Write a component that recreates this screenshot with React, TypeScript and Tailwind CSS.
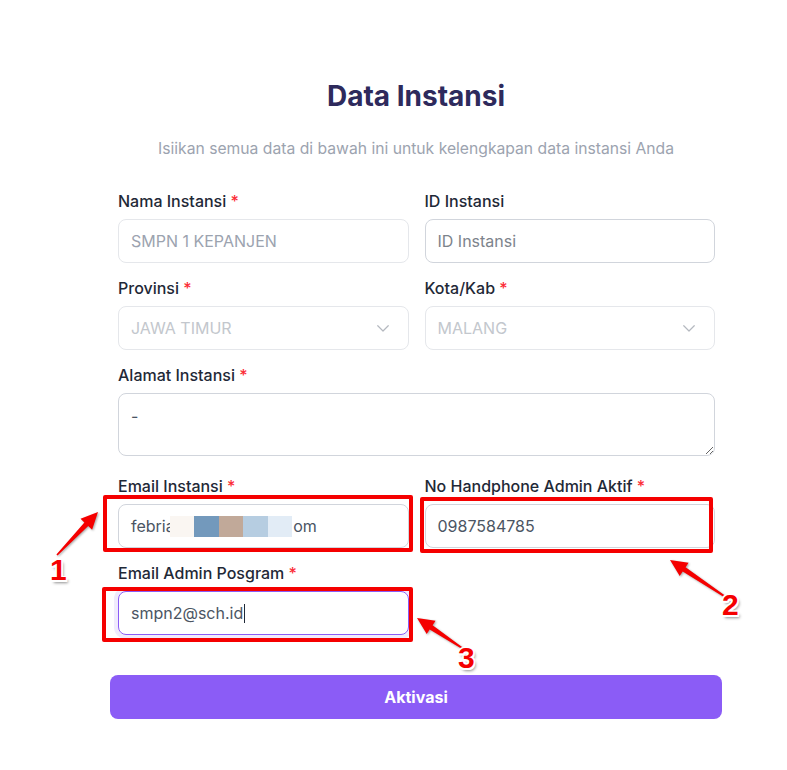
import type React from "react";

// Red callout arrow: thin tail widening into a triangular head
const arrowPoints = (tx: number, ty: number, hx: number, hy: number) => {
  const dx = hx - tx;
  const dy = hy - ty;
  const len = Math.hypot(dx, dy);
  const ux = dx / len;
  const uy = dy / len;
  const nx = -uy;
  const ny = ux;
  const L = 17;
  const hw = 8;
  const sw = 2.6;
  const tw = 0.8;
  const bx = hx - ux * L;
  const by = hy - uy * L;
  const p = (x: number, y: number) => `${x.toFixed(1)},${y.toFixed(1)}`;
  return [
    p(tx + nx * tw, ty + ny * tw),
    p(bx + nx * sw, by + ny * sw),
    p(bx + nx * hw, by + ny * hw),
    p(hx, hy),
    p(bx - nx * hw, by - ny * hw),
    p(bx - nx * sw, by - ny * sw),
    p(tx - nx * tw, ty - ny * tw),
  ].join(" ");
};

const Label: React.FC<{ text: string; required?: boolean }> = ({ text, required }) => (
  <div className="mb-1.5 text-[16px] leading-6 font-medium text-[#1f2937]">
    {text}
    {required && <span className="text-red-500"> *</span>}
  </div>
);

const Chevron = () => (
  <svg viewBox="0 0 24 24" fill="none" stroke="#b4b8bf" strokeWidth={1.6} className="w-[18px] h-[18px]">
    <path d="M5 9l7 7 7-7" strokeLinecap="round" strokeLinejoin="round" />
  </svg>
);

const blocks = ["#faf6f2", "#7399bc", "#c1a999", "#b6cde1", "#e2ecf6"];

const numberShadow =
  "[text-shadow:-1.5px_-1.5px_0_#fff,1.5px_-1.5px_0_#fff,-1.5px_1.5px_0_#fff,1.5px_1.5px_0_#fff,0_1.5px_0_#fff,1.5px_0_0_#fff,-1.5px_0_0_#fff,0_-1.5px_0_#fff,2px_3px_3px_rgba(0,0,0,0.45)]";

export default function App() {
  return (
    <div className="relative min-h-[770px] bg-white font-['Inter',sans-serif]">
      <div className="ml-[110px] w-[612px] pt-[79px]">
        <h1 className="text-center text-[28px] leading-[35px] font-bold text-[#2e2a5c]">Data Instansi</h1>
        <p className="mt-[23px] text-center text-[15.7px] leading-6 text-[#9ca3af]">
          Isiikan semua data di bawah ini untuk kelengkapan data instansi Anda
        </p>

        <div className="mt-[28px] ml-2 mr-[7px] grid grid-cols-2 gap-x-4 gap-y-[13px]">
          <div>
            <Label text="Nama Instansi" required />
            <div className="flex h-[44px] items-center rounded-lg border border-gray-200 px-3 text-[16px] text-[#9ca3af]">
              SMPN 1 KEPANJEN
            </div>
          </div>
          <div>
            <Label text="ID Instansi" />
            <div className="flex h-[44px] items-center rounded-lg border border-gray-300 px-3 text-[16px] text-[#7d838c]">
              ID Instansi
            </div>
          </div>

          <div>
            <Label text="Provinsi" required />
            <div className="flex h-[44px] items-center justify-between rounded-lg border border-gray-200 pl-3 pr-4 text-[16px] text-[#c3c7cd]">
              JAWA TIMUR
              <Chevron />
            </div>
          </div>
          <div>
            <Label text="Kota/Kab" required />
            <div className="flex h-[44px] items-center justify-between rounded-lg border border-gray-200 pl-3 pr-4 text-[16px] text-[#c3c7cd]">
              MALANG
              <Chevron />
            </div>
          </div>

          <div className="col-span-2">
            <Label text="Alamat Instansi" required />
            <textarea
              readOnly
              defaultValue="-"
              className="mb-[5px] block h-[63px] w-full rounded-lg border border-gray-300 px-3 py-2.5 text-[16px] leading-6 text-[#4b5563] outline-none"
            />
          </div>

          <div>
            <Label text="Email Instansi" required />
            <div className="flex h-[44px] items-center rounded-lg border border-gray-300 px-3 text-[16px] text-[#4b5563]">
              <span className="whitespace-nowrap">febria</span>
              <span className="-ml-[5px] flex">
                {blocks.map((c) => (
                  <span key={c} className="h-[21px] w-[24.5px]" style={{ backgroundColor: c }} />
                ))}
              </span>
              <span className="ml-[1px]">om</span>
            </div>
          </div>
          <div>
            <Label text="No Handphone Admin Aktif" required />
            <div className="flex h-[44px] items-center rounded-lg border border-gray-300 px-3 text-[16px] text-[#4b5563]">
              0987584785
            </div>
          </div>

          <div>
            <Label text="Email Admin Posgram" required />
            <div className="flex h-[44px] items-center rounded-lg border border-[#8b5cf6] px-3 text-[16px] text-[#4b5563] ring-4 ring-[#f0ebfd]">
              smpn2@sch.id
              <span className="ml-[1px] h-[19px] w-px bg-[#1f2937]" />
            </div>
          </div>
        </div>

        <button className="mt-10 flex h-[44px] w-full items-center justify-center rounded-lg bg-[#8b5cf6] text-[16px] font-bold text-white">
          Aktivasi
        </button>
      </div>

      {/* Annotation overlay */}
      <div className="absolute left-[103px] top-[495px] h-[57px] w-[310px] rounded-[2px] border-4 border-[#f50000]" />
      <div className="absolute left-[420px] top-[497px] h-[56px] w-[293px] rounded-[2px] border-4 border-[#f50000]" />
      <div className="absolute left-[102px] top-[587px] h-[55px] w-[311px] rounded-[2px] border-4 border-[#f50000]" />

      <svg
        width="787"
        height="770"
        viewBox="0 0 787 770"
        className="pointer-events-none absolute left-0 top-0 [filter:drop-shadow(1px_1.5px_1px_rgba(0,0,0,0.35))]"
      >
        <polygon points={arrowPoints(57, 555, 98, 512)} fill="#f50000" />
        <polygon points={arrowPoints(727, 598, 670, 560)} fill="#f50000" />
        <polygon points={arrowPoints(462, 648, 417, 618)} fill="#f50000" />
      </svg>

      <span className={"absolute left-[50px] top-[555px] text-[30px] leading-none font-bold text-[#f50000] font-['Liberation_Sans',Arial,sans-serif] " + numberShadow}>
        1
      </span>
      <span className={"absolute left-[722px] top-[590px] text-[30px] leading-none font-bold text-[#f50000] font-['Liberation_Sans',Arial,sans-serif] " + numberShadow}>
        2
      </span>
      <span className={"absolute left-[458px] top-[643px] text-[30px] leading-none font-bold text-[#f50000] font-['Liberation_Sans',Arial,sans-serif] " + numberShadow}>
        3
      </span>
    </div>
  );
}
